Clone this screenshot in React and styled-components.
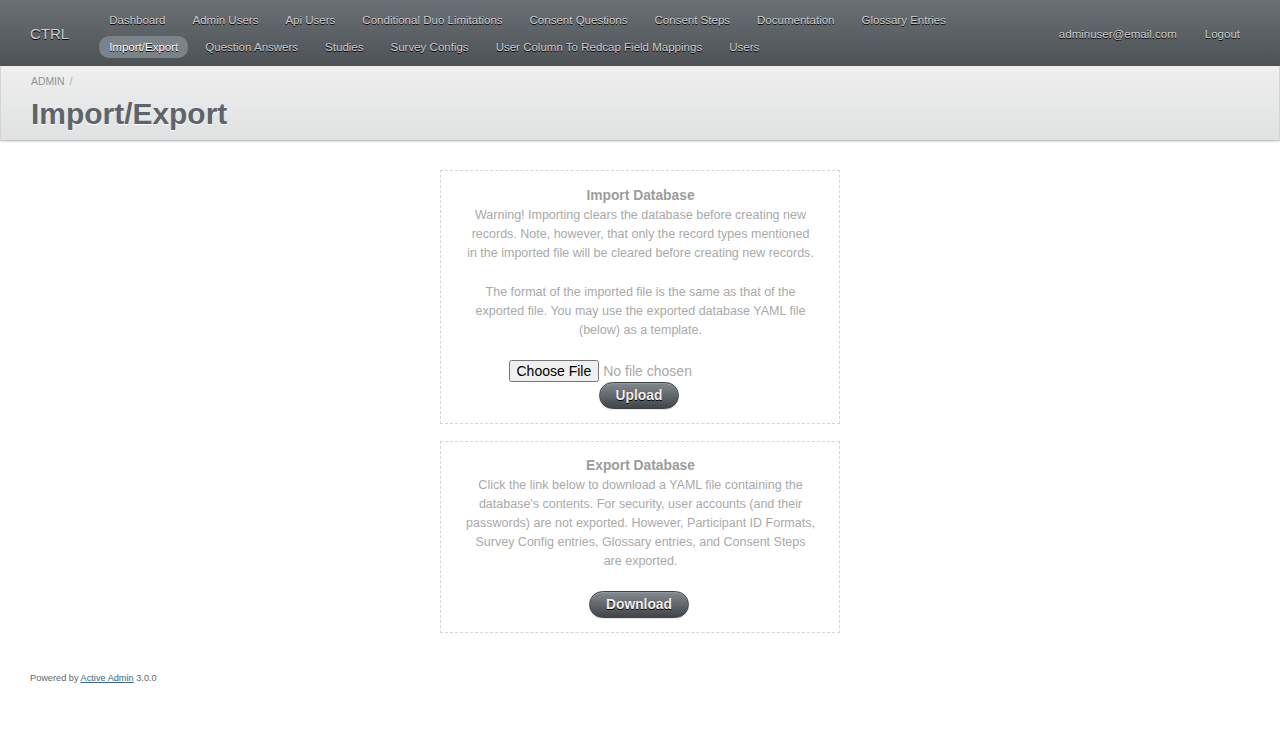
import styled, { createGlobalStyle } from "styled-components";

const GlobalStyle = createGlobalStyle`
  html, body {
    margin: 0;
    padding: 0;
    background: #fff;
  }
  body {
    font-family: "Liberation Sans", Arial, sans-serif;
    font-size: 11.52px;
    line-height: 150%;
    color: #323537;
  }
  * {
    box-sizing: border-box;
  }
`;

const menuTop = [
  "Dashboard",
  "Admin Users",
  "Api Users",
  "Conditional Duo Limitations",
  "Consent Questions",
  "Consent Steps",
  "Documentation",
  "Glossary Entries",
];

const menuBottom = [
  "Import/Export",
  "Question Answers",
  "Studies",
  "Survey Configs",
  "User Column To Redcap Field Mappings",
  "Users",
];

export default function App() {
  return (
    <>
      <GlobalStyle />
      <Header>
        <SiteTitle>CTRL</SiteTitle>
        <Tabs>
          <TabRow>
            {menuTop.map((t) => (
              <Tab key={t}>{t}</Tab>
            ))}
          </TabRow>
          <TabRow>
            {menuBottom.map((t) => (
              <Tab key={t} $current={t === "Import/Export"}>
                {t}
              </Tab>
            ))}
          </TabRow>
        </Tabs>
        <UtilityNav>
          <Tab>adminuser@email.com</Tab>
          <Tab>Logout</Tab>
        </UtilityNav>
      </Header>

      <TitleBar>
        <Breadcrumb>
          <a href="#">ADMIN</a>
          <span>/</span>
        </Breadcrumb>
        <PageTitle>Import/Export</PageTitle>
      </TitleBar>

      <Main>
        <Panel>
          <PanelTitle>Import Database</PanelTitle>
          <PanelText>
            Warning! Importing clears the database before creating new records. Note,
            however, that only the record types mentioned in the imported file will be
            cleared before creating new records.
          </PanelText>
          <PanelText>
            The format of the imported file is the same as that of the exported file.
            You may use the exported database YAML file (below) as a template.
          </PanelText>
          <UploadForm onSubmit={(e) => e.preventDefault()}>
            <FileInput type="file" />
            <ActionButton type="submit">Upload</ActionButton>
          </UploadForm>
        </Panel>

        <Panel $tight>
          <PanelTitle>Export Database</PanelTitle>
          <PanelText>
            Click the link below to download a YAML file containing the database's
            contents. For security, user accounts (and their passwords) are not
            exported. However, Participant ID Formats, Survey Config entries, Glossary
            entries, and Consent Steps are exported.
          </PanelText>
          <ButtonLine>
            <ActionButton as="a" href="#">
              Download
            </ActionButton>
          </ButtonLine>
        </Panel>
      </Main>

      <Footer>
        Powered by <a href="#">Active Admin</a> 3.0.0
      </Footer>
    </>
  );
}

const Header = styled.header`
  display: flex;
  align-items: center;
  height: 67px;
  padding: 0 30px;
  background: linear-gradient(180deg, #6b7075 0%, #4d5256 100%);
  border-bottom: 1px solid #f2f2f2;
`;

const SiteTitle = styled.h1`
  margin: 0 30px 0 0;
  padding-top: 1px;
  font-size: 15px;
  font-weight: normal;
  line-height: 18px;
  color: #cdcdcd;
  text-shadow: #000 0 1px 0;
  white-space: nowrap;
`;

const Tabs = styled.nav`
  display: flex;
  flex-direction: column;
  gap: 5px;
  flex: 1;
`;

const TabRow = styled.div`
  display: flex;
  gap: 7px;
`;

const Tab = styled.a`
  display: inline-block;
  height: 22px;
  line-height: 22px;
  padding: 0 10px;
  border-radius: 10px;
  color: ${(p) => (p.$current ? "#fff" : "#cdcdcd")};
  background: ${(p) => (p.$current ? "#7b8389" : "transparent")};
  text-shadow: #000 0 1px 0;
  text-decoration: none;
  white-space: nowrap;
  cursor: pointer;
`;

const UtilityNav = styled.div`
  display: flex;
  gap: 8px;
  padding-top: 2px;
`;

const TitleBar = styled.div`
  height: 73px;
  padding: 9px 30px 0;
  background: linear-gradient(180deg, #efefef 0%, #dfe1e2 100%);
  border-left: 1px solid #d4d4d4;
  border-right: 1px solid #d4d4d4;
  box-shadow: 0 1px 2px #aaa;
`;

const Breadcrumb = styled.div`
  font-size: 10.4px;
  line-height: 12px;
  color: #8a949e;
  a {
    color: #8a949e;
    text-decoration: none;
  }
  span {
    margin: 0 4px 0 5px;
    color: #aaa;
  }
`;

const PageTitle = styled.h2`
  margin: 9px 0 0;
  font-size: 29.95px;
  line-height: 34px;
  font-weight: bold;
  color: #5e6469;
  text-shadow: #fff 0 1px 0;
`;

const Main = styled.main`
  display: flex;
  flex-direction: column;
  align-items: center;
  gap: 17px;
  padding: 30px 30px 0;
`;

const Panel = styled.section`
  width: 400px;
  padding: ${(p) => (p.$tight ? "13px" : "14px")} 24px 14px 25px;
  border: 1px dashed #d6d6d6;
  text-align: center;
  color: #a9a9a9;
`;

const PanelTitle = styled.h3`
  margin: 0 0 1px;
  font-size: 13.82px;
  line-height: 20px;
  font-weight: bold;
  color: #9c9c9c;
`;

const PanelText = styled.p`
  margin: 0 0 19.2px;
  font-size: 12.5px;
  line-height: 19.2px;
`;

const UploadForm = styled.form`
  display: flex;
  flex-direction: column;
  align-items: center;
  margin-top: 1px;
`;

const FileInput = styled.input`
  font-family: "Liberation Sans", Arial, sans-serif;
  font-size: 14px;
  color: #a9a9a9;
  margin-left: 1px;
`;

const ButtonLine = styled.div`
  display: flex;
  justify-content: center;
  margin-top: 0;
`;

const ActionButton = styled.button`
  display: inline-block;
  height: 27px;
  padding: 0 16px;
  margin-left: -3px;
  border: 1px solid #3e4347;
  border-radius: 200px;
  background: linear-gradient(180deg, #838a90 0%, #414549 100%);
  box-shadow: 0 1px 1px rgba(0, 0, 0, 0.1), inset 0 1px 0 #929a9f;
  color: #efefef;
  font-family: "Liberation Sans", Arial, sans-serif;
  font-size: 13.82px;
  font-weight: bold;
  line-height: 25px;
  text-shadow: #000 0 1px 0;
  text-decoration: none;
  cursor: pointer;
`;

const Footer = styled.footer`
  padding: 39px 30px;
  font-size: 9.2px;
  line-height: 12px;
  color: #666;
  a {
    color: #38678b;
  }
`;
